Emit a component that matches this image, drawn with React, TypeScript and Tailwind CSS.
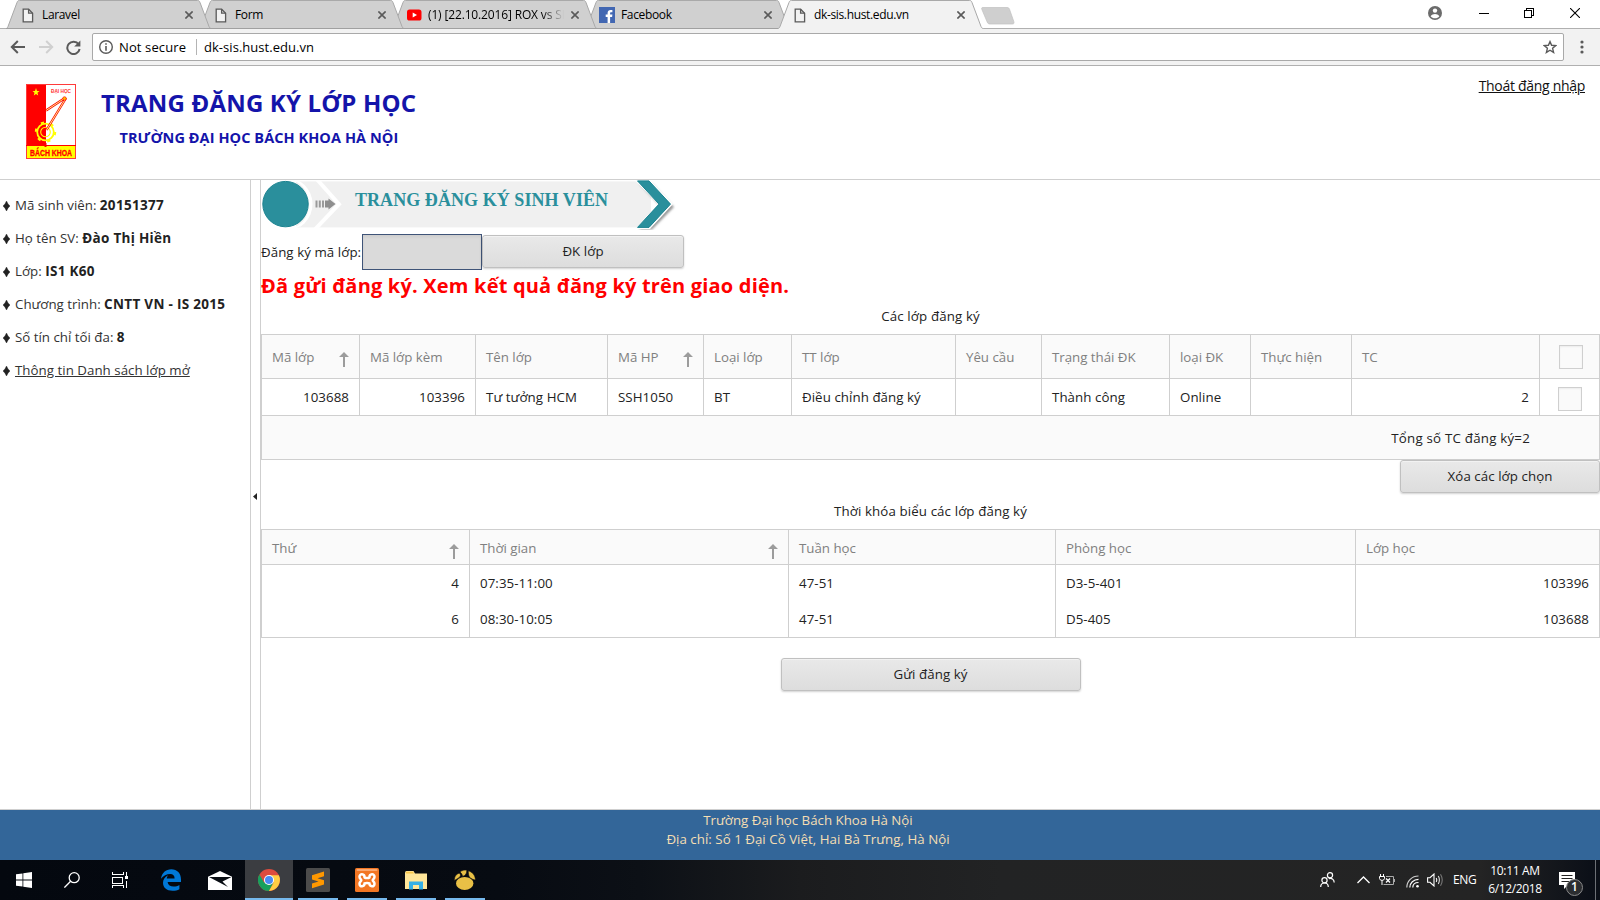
import React from "react";

const FONT = "font-['Open_Sans','Noto_Sans',sans-serif]";

const DocIcon = () => (
  <svg className="ml-px" width="12" height="15" viewBox="0 0 12 15" fill="#f2f2f2" stroke="#5a5a5a" strokeWidth="1.3">
    <path d="M1.2 1.2H6.6L10.6 5.2V13.8H1.2Z" />
    <path d="M6.6 1.2V5.2H10.6" fill="none" />
  </svg>
);

const YoutubeIcon = () => (
  <svg width="15" height="12" viewBox="0 0 15 12">
    <rect x="0" y="0.5" width="14.5" height="11" rx="2.6" fill="#f00" />
    <path d="M5.7 3.4V8.4L10 5.9Z" fill="#fff" />
  </svg>
);

const FacebookIcon = () => (
  <svg className="-ml-px" width="16" height="16" viewBox="0 0 16 16">
    <rect width="16" height="16" fill="#4267b2" />
    <path d="M8.6 16V10H6.7V7.6H8.6V6C8.6 4 9.8 3 11.6 3H13.4V5.2H12.2C11.3 5.2 11.1 5.6 11.1 6.3V7.6H13.4L13.1 10H11.1V16Z" fill="#fff" />
  </svg>
);

type TabProps = { title: string; icon: React.ReactNode; active?: boolean; fade?: boolean; layer: string };

const Tab = ({ title, icon, active, fade, layer }: TabProps) => (
  <div className={`relative h-[29px] w-[193px] shrink-0 ${layer}`}>
    <svg className="absolute top-0 left-0" width="206" height="29" viewBox="0 0 206 29">
      <path
        d="M0 28.5C1 28.5 1.6 27.5 2 26.5L11 2.5C11.6 1 12 .5 13.5 .5H191.5C193 .5 193.4 1 194 2.5L203 26.5C203.4 27.5 204 28.5 205.5 28.5V29H0Z"
        fill={active ? "#f2f2f2" : "#d0d0d0"}
      />
      <path
        d="M0 28.5C1 28.5 1.6 27.5 2 26.5L11 2.5C11.6 1 12 .5 13.5 .5H191.5C193 .5 193.4 1 194 2.5L203 26.5C203.4 27.5 204 28.5 205.5 28.5"
        fill="none"
        stroke="#a9a9a9"
      />
      {!active && <path d="M0 28.5H206" stroke="#a0a0a0" />}
    </svg>
    <div className="relative flex h-[29px] items-center pl-[15px]">
      <div className="flex w-[21px] items-center pt-px">
        {icon}
      </div>
      <div className="w-[137px] text-[12px] leading-[18px] whitespace-nowrap text-black">
        {fade ? (
          <span className="bg-[linear-gradient(90deg,#000_114px,transparent_136px)] bg-clip-text tracking-[-0.15px] text-transparent">{title}</span>
        ) : (
          <span className="tracking-[-0.35px]">{title}</span>
        )}
      </div>
      <svg className="mt-px ml-[6px]" width="8" height="8" viewBox="0 0 8 8" stroke="#5a5a5a" strokeWidth="1.6">
        <path d="M.4 .4L7.6 7.6M7.6 .4L.4 7.6" />
      </svg>
    </div>
  </div>
);

const TabStrip = () => (
  <div className="relative flex h-[29px] items-start bg-white pl-[6px]">
    <div className="absolute bottom-0 left-0 h-px w-full bg-[#b0b0b0]" />
    <Tab title="Laravel" icon={<DocIcon />} layer="z-[5]" />
    <Tab title="Form" icon={<DocIcon />} layer="z-[4]" />
    <Tab title="(1) [22.10.2016] ROX vs SI" icon={<YoutubeIcon />} fade layer="z-[3]" />
    <Tab title="Facebook" icon={<FacebookIcon />} layer="z-[2]" />
    <Tab title="dk-sis.hust.edu.vn" icon={<DocIcon />} active layer="z-[6]" />
    <svg className="relative z-[7] mt-[6px] ml-[9px]" width="38" height="20" viewBox="0 0 38 20">
      <path d="M3 1.5H27C28.5 1.5 29 2 29.600 3.500L33.800 15.500C34.300 17.200 33.900 18 32.500 18H10C8.500 18 7.800 17.500 7.200 16L1.900 3.500C1.400 2 1.600 1.500 3 1.500Z" fill="#cfcfcf" stroke="#c0c0c0" strokeWidth=".7" />
    </svg>
    <div className="flex flex-1 items-center justify-end pt-[6px] pr-[20px]">
      <svg width="14" height="14" viewBox="0 0 14 14">
        <circle cx="7" cy="7" r="7" fill="#6b6b6b" />
        <circle cx="7" cy="4.6" r="2.2" fill="#fff" />
        <path d="M2.6 10.3C3.6 8.7 5.3 8 7 8S10.4 8.7 11.4 10.3C10.2 11.7 8.8 12.3 7 12.3S3.8 11.7 2.6 10.3Z" fill="#fff" />
      </svg>
      <svg className="ml-[37px]" width="10" height="10" viewBox="0 0 10 10" shapeRendering="crispEdges">
        <path d="M0 5.5H10" stroke="#000" />
      </svg>
      <svg className="ml-[35px]" width="10" height="10" viewBox="0 0 10 10" fill="none" stroke="#000" shapeRendering="crispEdges">
        <path d="M.5 2.5H7.5V9.5H.5ZM2.5 2.5V.5H9.5V7.5H7.5" />
      </svg>
      <svg className="ml-[36px]" width="10" height="10" viewBox="0 0 10 10" stroke="#000" strokeWidth="1.1">
        <path d="M0 0L10 10M10 0L0 10" />
      </svg>
    </div>
  </div>
);

const Toolbar = () => (
  <div className="flex h-[37px] items-center border-b border-[#b0b0b0] bg-[#f2f2f2]">
    <svg className="ml-[10px]" width="15" height="14" viewBox="0 0 15 14" fill="none" stroke="#5a5a5a" strokeWidth="2">
      <path d="M15 7H2M7.8 1L1.8 7L7.8 13" />
    </svg>
    <svg className="ml-[14px]" width="15" height="14" viewBox="0 0 15 14" fill="none" stroke="#d0d0d0" strokeWidth="2">
      <path d="M0 7H13M7.2 1L13.2 7L7.2 13" />
    </svg>
    <svg className="ml-[12px]" width="15" height="15" viewBox="0 0 15 15">
      <path d="M12.6 4.3A6.2 6.2 0 1 0 13.6 9" fill="none" stroke="#5a5a5a" strokeWidth="2" />
      <path d="M14.4 .4V6.6H8.2Z" fill="#5a5a5a" />
    </svg>
    <div className="ml-[11px] flex h-[28px] w-[1472px] items-center rounded-[2px] border border-[#a9a9a9] bg-white">
      <svg className="ml-[6px]" width="14" height="14" viewBox="0 0 14 14">
        <circle cx="7" cy="7" r="6.3" fill="none" stroke="#5a5a5a" strokeWidth="1.4" />
        <path d="M7 3.2V4.8M7 6V10.8" stroke="#5a5a5a" strokeWidth="1.6" />
      </svg>
      <div className="ml-[6px] w-[77px] text-[13px] leading-[20px] tracking-[0.12px] whitespace-nowrap text-black">Not secure</div>
      <div className="h-[16px] w-px bg-[#b4b4b4]" />
      <div className="ml-[7px] flex-1 text-[13px] leading-[20px] tracking-[0.04px] text-black">dk-sis.hust.edu.vn</div>
      <svg className="mr-[6px]" width="14" height="14" viewBox="0 0 14 14" fill="none" stroke="#5a5a5a" strokeWidth="1.4">
        <path d="M7 1.6L8.6 5.3L12.8 5.6L9.6 8.3L10.6 12.4L7 10.2L3.4 12.4L4.4 8.3L1.2 5.6L5.4 5.3Z" />
      </svg>
    </div>
    <svg className="ml-[16px]" width="4" height="14" viewBox="0 0 4 14" fill="#5a5a5a">
      <circle cx="2" cy="2" r="1.6" />
      <circle cx="2" cy="7" r="1.6" />
      <circle cx="2" cy="12" r="1.6" />
    </svg>
  </div>
);

const Logo = () => (
  <svg width="50" height="75" viewBox="0 0 50 75">
    <rect width="50" height="75" fill="#fff" />
    <rect width="20" height="62" fill="#f00" />
    <rect x=".5" y=".5" width="49" height="74" fill="none" stroke="#ff3b3b" />
    <rect x="1" y="62" width="48" height="12" fill="#ff0" />
    <path d="M0 61.5H50" stroke="#f00" />
    <path d="M10 4L11 7H13.5L11.5 8.8L12.2 11.6L10 10L7.8 11.6L8.5 8.8L6.5 7H9Z" fill="#ff0" />
    <text x="25" y="9.3" fontSize="5.4" fontWeight="700" fill="#f33" textLength="20" lengthAdjust="spacingAndGlyphs" fontFamily="Liberation Sans, sans-serif">ĐẠI HỌC</text>
    <circle cx="19.5" cy="48" r="8.3" fill="none" stroke="#ff0" strokeWidth="1.8" />
    <circle cx="19.5" cy="48" r="9.7" fill="none" stroke="#ff0" strokeWidth="2" strokeDasharray="3.2 6.96" />
    <circle cx="19.5" cy="48" r="4.8" fill="none" stroke="#ff0" strokeWidth="1.1" />
    <path d="M39 14L20 26.5M40 14L20.5 46" stroke="#f00" strokeWidth="2.4" />
    <path d="M39 14L20 26.5M40 14L20.5 46" stroke="#fe8" strokeWidth="1" />
    <circle cx="38.5" cy="14.5" r="1.8" fill="#fb0" stroke="#f00" strokeWidth=".6" />
    <path d="M19.5 59V63" stroke="#f00" strokeWidth="2" />
    <text x="4" y="72" fontSize="8.4" fontWeight="700" fill="#f00" stroke="#f00" strokeWidth=".3" textLength="42" lengthAdjust="spacingAndGlyphs" fontFamily="Liberation Sans, sans-serif">BÁCH KHOA</text>
  </svg>
);

const PageHeader = () => (
  <header className="flex h-[114px] items-start border-b border-[#cfcfcf] bg-white">
    <div className="mt-[18px] ml-[26px]">
      <Logo />
    </div>
    <div className="ml-[25px] flex flex-1 flex-col font-bold whitespace-nowrap text-[#1414aa]">
      <div className="mt-[20px] text-[24px] leading-[34px] tracking-[0.18px]">TRANG ĐĂNG KÝ LỚP HỌC</div>
      <div className="mt-[8px] ml-[18.5px] text-[14.5px] leading-[20px] tracking-[0.07px]">TRƯỜNG ĐẠI HỌC BÁCH KHOA HÀ NỘI</div>
    </div>
    <a className="mt-[9px] mr-[15px] text-[14px] leading-[22px] tracking-[-0.3px] text-[#111] underline">Thoát đăng nhập</a>
  </header>
);

const Diamond = () => (
  <svg width="7" height="10" viewBox="0 0 7 10" fill="#222">
    <path d="M3.5 0Q4.6 3 7 5Q4.6 7 3.5 10Q2.400 7 0 5Q2.400 3 3.5 0Z" stroke="#222" strokeWidth=".4" />
  </svg>
);

const students = [
  { label: "Mã sinh viên:", value: "20151377" },
  { label: "Họ tên SV:", value: "Đào Thị Hiền" },
  { label: "Lớp:", value: "IS1 K60" },
  { label: "Chương trình:", value: "CNTT VN - IS 2015" },
  { label: "Số tín chỉ tối đa:", value: "8" },
];

const Sidebar = () => (
  <aside className="flex w-[250px] shrink-0 flex-col bg-white pt-[9px] text-[13.3px] leading-[33px] text-[#333]">
    {students.map((s) => (
      <div key={s.label} className="flex h-[33px] items-center gap-[5.5px] pl-[2.5px] whitespace-nowrap">
        <Diamond />
        <span>
          {s.label} <b className="text-[13.5px] font-bold tracking-[0.3px] text-[#222]">{s.value}</b>
        </span>
      </div>
    ))}
    <div className="flex h-[33px] items-center gap-[5.5px] pl-[2.5px] whitespace-nowrap">
      <Diamond />
      <a className="tracking-[0.03px] underline">Thông tin Danh sách lớp mở</a>
    </div>
  </aside>
);

const Banner = () => (
  <div className="relative h-[50px] w-[420px]">
    <svg width="420" height="50" viewBox="0 -0.4 420 50">
      <defs>
        <filter id="soft" x="-20%" y="-20%" width="150%" height="150%">
          <feGaussianBlur stdDeviation="1.3" />
        </filter>
      </defs>
      <rect x="24" y="1" width="366" height="46" fill="#f0f0f0" />
      <path d="M376 0H424V50H376L398 24Z" fill="#fff" />
      <circle cx="24.5" cy="23.7" r="27" fill="#fff" />
      <path d="M35 1H38Q58 23.7 38 47H35" fill="#f0f0f0" />
      <circle cx="24.5" cy="23.7" r="25.5" fill="none" stroke="#fff" strokeWidth="2" />
      <path d="M56 -1L78 23.7L54 49" fill="none" stroke="#fff" strokeWidth="4" />
      <circle cx="24.5" cy="23.7" r="22.7" fill="#2a8f9c" stroke="#1b8390" />
      <path d="M55.500 20V27M58.800 20V27M62 20V27" stroke="#9a9a9a" strokeWidth="2" />
      <path d="M64 20H67.500V18L74.5 23.5L67.500 29V27H64Z" fill="#8e8e8e" />
      <path d="M378 3H391L413 26.5L391 49H378L400 26.5Z" fill="#9a9a9a" filter="url(#soft)" />
      <path d="M374 0H389.5L412 23.7L389 48.5H374L397 23.7Z" fill="#fff" />
      <path d="M376.500 .5H388L409.5 23.7L388 47H376.500L398 23.7Z" fill="#2a8f9c" stroke="#1b8390" />
    </svg>
    <div className="absolute top-[9px] left-[94px] font-['Liberation_Serif',serif] text-[18px] leading-[22px] font-bold whitespace-nowrap text-[#2a8f9c]">
      TRANG ĐĂNG KÝ SINH VIÊN
    </div>
  </div>
);

const Button = ({ children, size }: { children: React.ReactNode; size: string }) => (
  <button
    className={`h-[33px] rounded-[3px] border border-[#c0c0c0] bg-linear-to-b from-[#e9e9e9] to-[#dddddd] pb-px text-[13.3px] leading-[20px] tracking-[0.06px] text-[#222] shadow-[0_1px_2px_rgba(0,0,0,0.18),inset_0_1px_0_#f2f2f2] ${size}`}
  >
    {children}
  </button>
);

const SortArrow = () => (
  <svg className="mt-[6px] shrink-0" width="10" height="15" viewBox="0 0 10 15" fill="#9c9c9c">
    <path d="M5 0L10 5H6V15H4V5H0Z" />
  </svg>
);

const Head = ({ children, sort }: { children?: React.ReactNode; sort?: boolean }) => (
  <div className="flex items-center justify-between border-l border-[#cfcfcf] bg-[#fafafa] pr-[10px] pl-[10px] tracking-[-0.02px] whitespace-nowrap text-[#808080]">
    <span>{children}</span>
    {sort && <SortArrow />}
  </div>
);

const Cell = ({ children, right }: { children?: React.ReactNode; right?: boolean }) => (
  <div className={`flex items-center border-l border-[#cfcfcf] px-[10px] whitespace-nowrap ${right ? "justify-end" : ""}`}>{children}</div>
);

const Box = () => <span className="block size-[24px] border border-[#cfcfcf] bg-[#fafafa] shadow-[inset_0_1px_2px_rgba(0,0,0,0.06)]" />;

const CLASS_COLS = "grid grid-cols-[98px_116px_132px_96px_88px_164px_86px_128px_81px_101px_188px_60px]";
const TIME_COLS = "grid grid-cols-[208px_319px_267px_300px_244px]";

const RegisteredTable = () => (
  <div className="border-y border-r border-[#cfcfcf]">
    <div className={`h-[44px] border-b border-[#cfcfcf] ${CLASS_COLS}`}>
      <Head sort>Mã lớp</Head>
      <Head>Mã lớp kèm</Head>
      <Head>Tên lớp</Head>
      <Head sort>Mã HP</Head>
      <Head>Loại lớp</Head>
      <Head>TT lớp</Head>
      <Head>Yêu cầu</Head>
      <Head>Trạng thái ĐK</Head>
      <Head>loại ĐK</Head>
      <Head>Thực hiện</Head>
      <Head>TC</Head>
      <div className="flex items-center border-l border-[#cfcfcf] bg-[#fafafa] pl-[19px]">
        <Box />
      </div>
    </div>
    <div className={`h-[37px] border-b border-[#cfcfcf] ${CLASS_COLS}`}>
      <Cell right>103688</Cell>
      <Cell right>103396</Cell>
      <Cell>Tư tưởng HCM</Cell>
      <Cell>SSH1050</Cell>
      <Cell>BT</Cell>
      <Cell>Điều chỉnh đăng ký</Cell>
      <Cell />
      <Cell>Thành công</Cell>
      <Cell>Online</Cell>
      <Cell />
      <Cell right>2</Cell>
      <div className="flex items-center border-l border-[#cfcfcf] pt-[4px] pl-[18px]">
        <Box />
      </div>
    </div>
    <div className="flex h-[43px] items-center justify-end border-l border-[#cfcfcf] bg-[#fafafa] pr-[69px] tracking-[0.22px]">Tổng số TC đăng ký=2</div>
  </div>
);

const slots = [
  ["4", "07:35-11:00", "47-51", "D3-5-401", "103396"],
  ["6", "08:30-10:05", "47-51", "D5-405", "103688"],
];

const TimeTable = () => (
  <div className="border-y border-r border-[#cfcfcf]">
    <div className={`h-[35px] border-b border-[#cfcfcf] [&>div]:pt-[2px] ${TIME_COLS}`}>
      <Head sort>Thứ</Head>
      <Head sort>Thời gian</Head>
      <Head>Tuần học</Head>
      <Head>Phòng học</Head>
      <Head>Lớp học</Head>
    </div>
    {slots.map((s) => (
      <div key={s[0]} className={`h-[36px] ${TIME_COLS}`}>
        <Cell right>{s[0]}</Cell>
        <Cell>{s[1]}</Cell>
        <Cell>{s[2]}</Cell>
        <Cell>{s[3]}</Cell>
        <Cell right>{s[4]}</Cell>
      </div>
    ))}
  </div>
);

const Main = () => (
  <main className="flex w-[1339px] flex-col text-[13.3px] leading-[20px] tracking-[0.06px] text-[#222]">
    <Banner />
    <div className="mt-[4px] flex h-[36px] items-start">
      <label className="mt-[8px] w-[101px] whitespace-nowrap">Đăng ký mã lớp:</label>
      <div className="h-[36px] w-[120px] border border-[#3f5478] bg-[#dadada] shadow-[inset_0_2px_3px_rgba(0,0,0,0.06)]" />
      <div className="mt-px flex">
        <Button size="w-[202px]">ĐK lớp</Button>
      </div>
    </div>
    <div className="h-[36px] pt-px text-[20px] leading-[30px] font-bold tracking-[0.19px] whitespace-nowrap text-[#f00]">
      Đã gửi đăng ký. Xem kết quả đăng ký trên giao diện.
    </div>
    <div className="h-[28px] text-center tracking-[0.13px]">Các lớp đăng ký</div>
    <RegisteredTable />
    <div className="flex justify-end">
      <Button size="w-[200px]">Xóa các lớp chọn</Button>
    </div>
    <div className="h-[36px] pt-[8px] text-center tracking-[0.11px]">Thời khóa biểu các lớp đăng ký</div>
    <TimeTable />
    <div className="mt-[20px] flex justify-center">
      <Button size="w-[300px]">Gửi đăng ký</Button>
    </div>
  </main>
);

const PageFooter = () => (
  <footer className="flex h-[51px] flex-col items-center border-t border-[#cfcfcf] bg-[#336699] pt-px pl-[16px] text-[13.3px] leading-[19px] text-[#f5deb3]">
    <div>Trường Đại học Bách Khoa Hà Nội</div>
    <div className="tracking-[0.03px]">Địa chỉ: Số 1 Đại Cồ Việt, Hai Bà Trưng, Hà Nội</div>
  </footer>
);

const TaskItem = ({ children, size, running, active }: { children: React.ReactNode; size: string; running?: boolean; active?: boolean }) => (
  <div className={`relative flex h-[40px] shrink-0 items-center justify-center ${size} ${active ? "bg-[#3b3d41]" : ""}`}>
    {children}
    {running && <div className={`absolute bottom-0 h-[2px] bg-[#76b9ed] ${active ? "inset-x-0" : "inset-x-[4px]"}`} />}
  </div>
);

const Taskbar = () => (
  <div className="flex h-[40px] items-stretch bg-[linear-gradient(90deg,#04080f_0,#070b12_500px,#0c1016_640px,#1b1c1e_800px,#222324_1000px,#242424_1480px,#0c1018_1590px)] text-white">
    <TaskItem size="w-[48px]">
      <svg width="16" height="16" viewBox="0 0 16 16" fill="#fff">
        <path d="M0 2.300L6.500 1.400V7.600H0ZM7.300 1.300L16 0V7.600H7.300ZM0 8.400H6.500V14.600L0 13.700ZM7.300 8.400H16V16L7.300 14.700Z" />
      </svg>
    </TaskItem>
    <TaskItem size="w-[48px]">
      <svg width="16" height="16" viewBox="0 0 16 16" fill="none" stroke="#fff" strokeWidth="1.3">
        <circle cx="10.200" cy="5.700" r="5" />
        <path d="M6.600 9.300L.4 15.600" />
      </svg>
    </TaskItem>
    <TaskItem size="w-[48px]">
      <svg width="17" height="16" viewBox="0 0 17 16" fill="none" stroke="#fff" shapeRendering="crispEdges">
        <path d="M.5 0V2.500H11.500V0M.5 5.500H10.500V11.500H.5ZM.5 16V13.500H11.500V16M14.500 0V4M14.500 9V16" />
        <rect x="13" y="4" width="3" height="3" fill="#fff" stroke="none" />
      </svg>
    </TaskItem>
    <TaskItem size="w-[54px]">
      <svg width="20" height="22" viewBox="0 0 20 22" fill="#0078d7">
        <path d="M0 9.800C.8 4 4.800 .3 10.300 .3C16.200 .3 20 4.500 20 10.500V13H6.600C6.900 16 9.400 17.500 12.600 17.500C14.800 17.500 16.700 17 18.400 15.900V20.300C16.500 21.300 14.200 21.800 11.500 21.800C5.700 21.800 2 18.600 2 13.800C2 10.500 3.800 7.800 7 6.200C6.200 7.300 5.800 8.400 5.700 9.500H13.600C13.600 6.600 12.100 5 9.200 5C5.600 5 2.300 6.800 0 9.800Z" />
      </svg>
    </TaskItem>
    <TaskItem size="w-[44px]">
      <svg width="24" height="19" viewBox="0 0 24 19">
        <path d="M0 5.800L12 0L24 5.800V19H0Z" fill="#fff" />
        <path d="M1 6H23.500L14.500 10.500L20 16L10.500 11Z" fill="#080c12" />
      </svg>
    </TaskItem>
    <div className="w-[3px]" />
    <TaskItem size="w-[48px]" running active>
      <svg width="22" height="22" viewBox="0 0 22 22">
        <circle cx="11" cy="11" r="11" fill="#dd4b3e" />
        <path d="M1.470 5.500A11 11 0 0 0 11 22L15.400 13.500L11 11L6.200 13.700Z" fill="#17a05d" />
        <path d="M11 22A11 11 0 0 0 20.800 6.200H11L15.600 13.700Z" fill="#ffce44" />
        <circle cx="11" cy="11" r="5" fill="#fff" />
        <circle cx="11" cy="11" r="4" fill="#4a8af4" />
      </svg>
    </TaskItem>
    <div className="w-px" />
    <TaskItem size="w-[48px]" running>
      <svg width="24" height="24" viewBox="0 0 24 24">
        <rect width="24" height="24" rx="1.500" fill="#4b4b4b" />
        <path d="M6 7.300L18 3.500V8.300L11.500 10.300L18 12.300V16.500L6 20.300V15.500L12.500 13.500L6 11.500Z" fill="#ff9800" />
      </svg>
    </TaskItem>
    <div className="w-px" />
    <TaskItem size="w-[48px]" running>
      <svg width="24" height="24" viewBox="0 0 24 24">
        <rect width="24" height="24" rx="1.500" fill="#f37623" />
        <rect x="1.500" y="1" width="21" height="2" rx="1" fill="#fba870" />
        <path d="M9.600 9.500C9.600 5.500 4.500 5.300 4.500 8.800C4.500 10.800 6.300 11.200 6.300 12.200C6.300 13.300 4.500 13.500 4.500 15.800C4.500 19.300 9.600 19 9.600 15.300C10.500 14.800 13.500 14.800 14.400 15.300C14.400 19 19.500 19.300 19.500 15.800C19.500 13.500 17.700 13.300 17.700 12.200C17.700 11.200 19.500 10.800 19.500 8.800C19.500 5.300 14.400 5.500 14.400 9.500C13.500 10.300 10.500 10.300 9.600 9.500Z" fill="none" stroke="#fff" strokeWidth="2.500" />
      </svg>
    </TaskItem>
    <div className="w-px" />
    <TaskItem size="w-[48px]" running>
      <svg width="22" height="19" viewBox="0 0 22 19">
        <path d="M0 2V18H22V2.500H10L8.500 0H1.500Q0 0 0 2Z" fill="#ffe69a" />
        <path d="M1 .8H8L9 2.500H1Z" fill="#f9c74a" />
        <path d="M4 18.500V10.500H18V18.500H14V14H8V18.500Z" fill="#35b0e6" />
      </svg>
    </TaskItem>
    <div className="w-px" />
    <TaskItem size="w-[48px]" running>
      <svg width="22" height="20" viewBox="0 0 22 20" fill="#e9c046">
        <ellipse cx="10.700" cy="13.400" rx="8.700" ry="6.500" />
        <path
          d="M.3 10.500C.3 6.500 2.500 3.600 5.500 3.200C6.800 4.500 6.800 6 5.500 7.200C4 8.600 2 9.500 .3 10.500ZM6 2C8 .3 10.500 -.2 12.800 .2C12.800 3 12 5.500 8.600 6.400C8.300 4.500 7.300 3 6 2ZM14.300 .8C18 1.800 21.300 5 21.500 10C19.800 10 17.200 8.800 15.500 7.300C14.500 5.500 14.200 3 14.300 .8Z"
          stroke="#0a0c10"
          strokeWidth=".6"
        />
      </svg>
    </TaskItem>
    <div className="flex flex-1 items-center justify-end">
      <svg width="15" height="16" viewBox="0 0 15 16" fill="none" stroke="#fff" strokeWidth="1.200">
        <circle cx="10" cy="3.300" r="2.600" />
        <circle cx="4.500" cy="8.300" r="2.600" />
        <path d="M.7 15C.7 12.500 2.500 11 4.500 11S8.300 12.500 8.300 15M8.800 6.800C11.500 5.500 14.200 7.500 14.200 10.500" />
      </svg>
      <svg className="ml-[22px]" width="13" height="8" viewBox="0 0 13 8" fill="none" stroke="#fff" strokeWidth="1.300">
        <path d="M.5 7L6.500 1L12.500 7" />
      </svg>
      <svg className="ml-[9px]" width="17" height="12" viewBox="0 0 17 12" fill="none" stroke="#fff">
        <path d="M1.500 0V2.500M4.500 0V2.500M.5 2.500H5.500V4.500Q5.500 6 3 6.500Q.5 6 .5 4.500ZM3 6.500V11" />
        <path d="M7 2.500H14.500V10.500H4.500M15.500 5V8" stroke="#aaa" />
        <path d="M7 4.500L11 8.500M11 4.500L7 8.500" strokeWidth="1.300" />
      </svg>
      <svg className="mt-[3px] ml-[10px]" width="14" height="13" viewBox="0 0 14 13" fill="none" stroke="#fff" strokeWidth="1.200">
        <path d="M.8 12.500C.8 6 6 1 12.500 1" stroke="#ccc" />
        <path d="M3.800 12.500C3.800 8 7.500 4.300 12.500 4.300M6.800 12.500C6.800 9.500 9 7.500 12.500 7.500" />
        <circle cx="11.500" cy="11.300" r="1.300" fill="#fff" stroke="none" />
      </svg>
      <svg className="ml-[7px]" width="17" height="14" viewBox="0 0 17 14" fill="none" stroke="#fff" strokeWidth="1.100">
        <path d="M.6 4.700H3L7 1V13L3 9.300H.6Z" />
        <path d="M9.200 5Q10.500 7 9.200 9" />
        <path d="M11.300 3Q13.500 7 11.300 11" stroke="#ddd" />
        <path d="M13.500 1.300Q17 7 13.500 12.700" stroke="#777" />
      </svg>
      <div className="ml-[9px] w-[24px] text-[12px] leading-[20px] tracking-[-0.3px]">ENG</div>
      <div className="ml-[10px] flex w-[56px] flex-col items-center text-[12px] leading-[18px] tracking-[-0.35px] whitespace-nowrap">
        <span>10:11 AM</span>
        <span>6/12/2018</span>
      </div>
      <div className="mt-[8px] ml-[16px] grid h-[24px] w-[25px]">
        <svg className="col-start-1 row-start-1" width="25" height="24" viewBox="0 0 25 24">
          <path d="M0 0H16V13H9L5 17V13H0Z" fill="#fff" />
          <path d="M2.500 3.500H13.500M2.500 6.500H13.500M2.500 9.500H10" stroke="#222" />
          <circle cx="15.500" cy="15.500" r="8" fill="#2b2d30" stroke="#8a8a8a" />
        </svg>
        <span className="col-start-1 row-start-1 mt-[7px] ml-[12px] w-[7px] text-center text-[12px] leading-[16px] font-semibold">1</span>
      </div>
      <div className="ml-[11px] h-full w-px bg-[#6d7075]" />
      <div className="w-[4px]" />
    </div>
  </div>
);

export default function App() {
  return (
    <div className={`flex h-[900px] w-[1600px] flex-col overflow-hidden bg-white ${FONT}`}>
      <TabStrip />
      <Toolbar />
      <PageHeader />
      <div className="flex h-[629px] items-stretch">
        <Sidebar />
        <div className="flex w-[11px] shrink-0 items-center border-x border-[#cfcfcf] pl-[2px]">
          <svg className="mt-[4px]" width="4" height="7" viewBox="0 0 4 7">
            <path d="M4 0V7L0 3.500Z" fill="#222" />
          </svg>
        </div>
        <Main />
      </div>
      <PageFooter />
      <Taskbar />
    </div>
  );
}
